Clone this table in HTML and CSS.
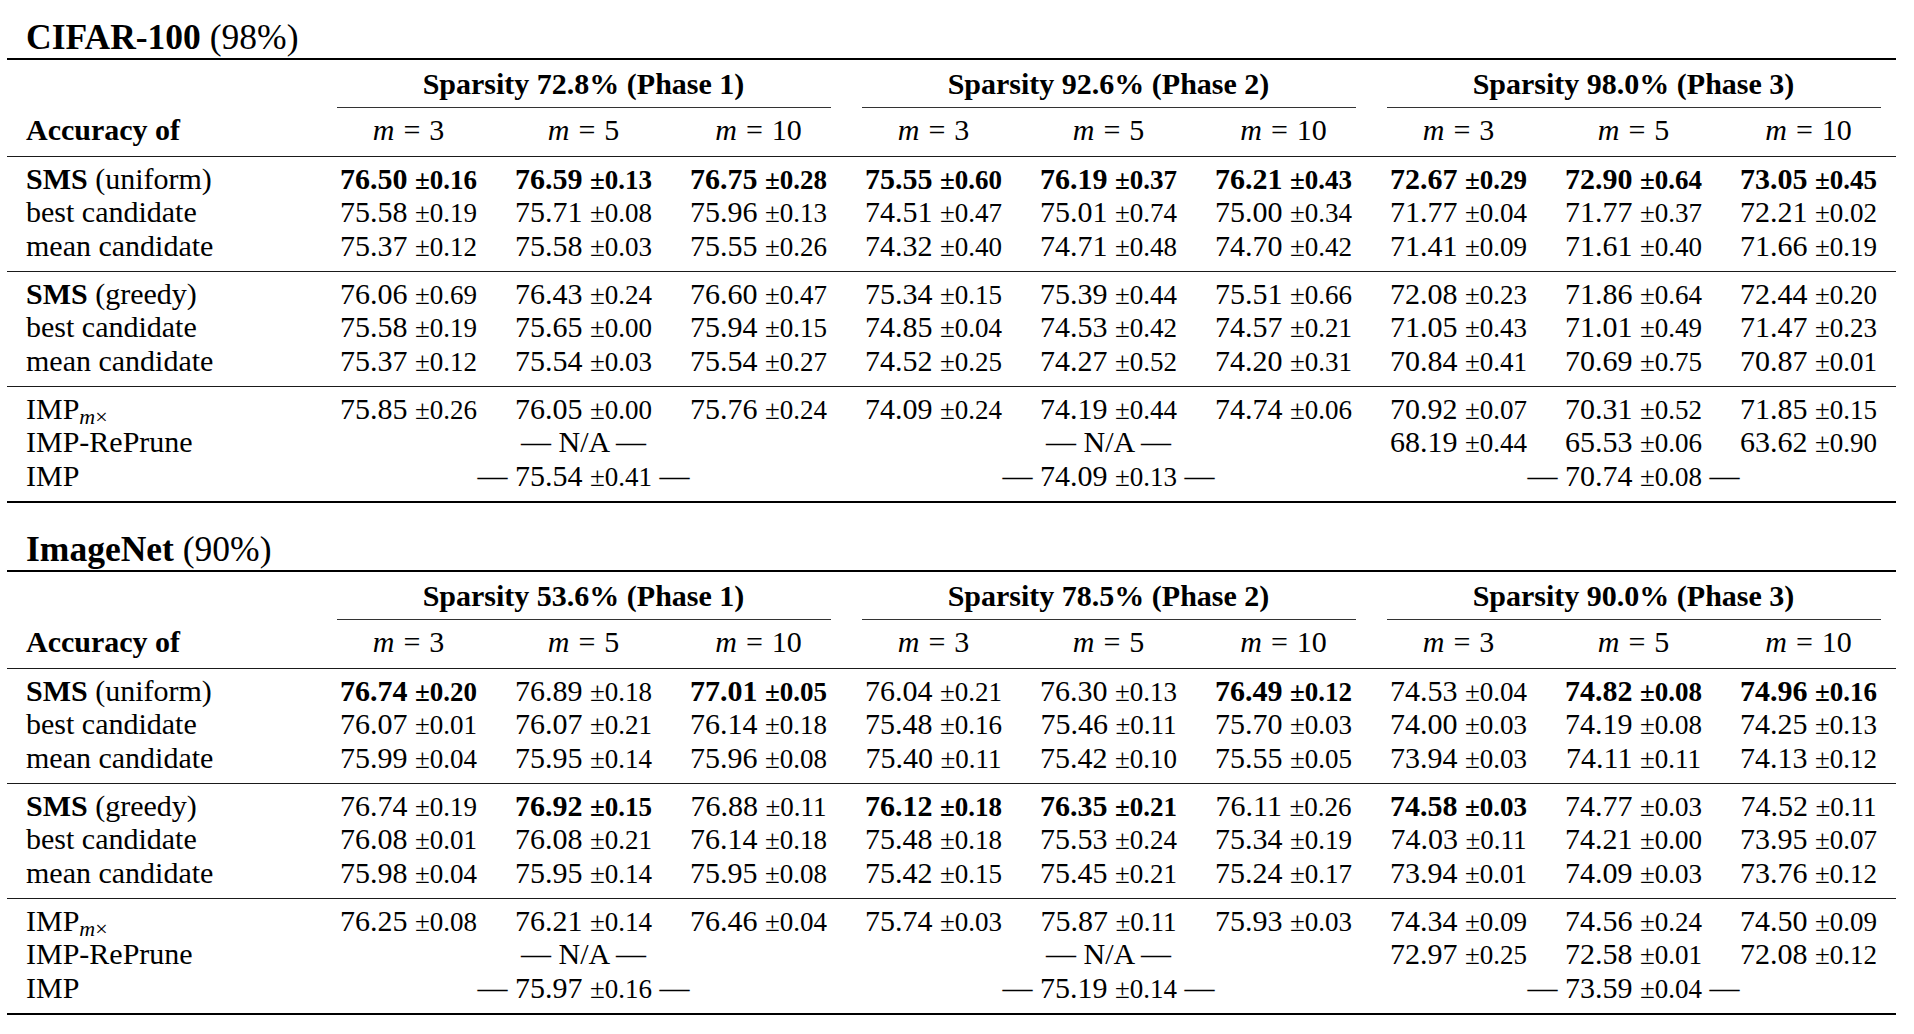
FILE: index.html
```html
<!DOCTYPE html>
<html lang="en">
<head>
<meta charset="utf-8">
<title>SMS results</title>
<link rel="stylesheet" href="styles.css">
</head>
<body>
<div class="page">

<h2 class="title"><b>CIFAR-100</b> (98%)</h2>
<div class="tbl">
  <div class="grid head">
    <span></span>
    <span class="hd s3">Sparsity 72.8% (Phase 1)</span>
    <span class="hd s3">Sparsity 92.6% (Phase 2)</span>
    <span class="hd s3">Sparsity 98.0% (Phase 3)</span>
    <span></span>
    <span class="cmid s3"></span><span class="cmid s3"></span><span class="cmid s3"></span>
    <span class="lab hd">Accuracy of</span>
    <span class="m"><i>m</i><span class="eq">=</span>3</span><span class="m"><i>m</i><span class="eq">=</span>5</span><span class="m"><i>m</i><span class="eq">=</span>10</span>
    <span class="m"><i>m</i><span class="eq">=</span>3</span><span class="m"><i>m</i><span class="eq">=</span>5</span><span class="m"><i>m</i><span class="eq">=</span>10</span>
    <span class="m"><i>m</i><span class="eq">=</span>3</span><span class="m"><i>m</i><span class="eq">=</span>5</span><span class="m"><i>m</i><span class="eq">=</span>10</span>
  </div>
  <div class="grid grp">
    <span class="lab"><b>SMS</b> (uniform)</span>
    <span class="c b">76.50 <span class="pm">±0.16</span></span><span class="c b">76.59 <span class="pm">±0.13</span></span><span class="c b">76.75 <span class="pm">±0.28</span></span>
    <span class="c b">75.55 <span class="pm">±0.60</span></span><span class="c b">76.19 <span class="pm">±0.37</span></span><span class="c b">76.21 <span class="pm">±0.43</span></span>
    <span class="c b">72.67 <span class="pm">±0.29</span></span><span class="c b">72.90 <span class="pm">±0.64</span></span><span class="c b">73.05 <span class="pm">±0.45</span></span>
    <span class="lab">best candidate</span>
    <span class="c">75.58 <span class="pm">±0.19</span></span><span class="c">75.71 <span class="pm">±0.08</span></span><span class="c">75.96 <span class="pm">±0.13</span></span>
    <span class="c">74.51 <span class="pm">±0.47</span></span><span class="c">75.01 <span class="pm">±0.74</span></span><span class="c">75.00 <span class="pm">±0.34</span></span>
    <span class="c">71.77 <span class="pm">±0.04</span></span><span class="c">71.77 <span class="pm">±0.37</span></span><span class="c">72.21 <span class="pm">±0.02</span></span>
    <span class="lab">mean candidate</span>
    <span class="c">75.37 <span class="pm">±0.12</span></span><span class="c">75.58 <span class="pm">±0.03</span></span><span class="c">75.55 <span class="pm">±0.26</span></span>
    <span class="c">74.32 <span class="pm">±0.40</span></span><span class="c">74.71 <span class="pm">±0.48</span></span><span class="c">74.70 <span class="pm">±0.42</span></span>
    <span class="c">71.41 <span class="pm">±0.09</span></span><span class="c">71.61 <span class="pm">±0.40</span></span><span class="c">71.66 <span class="pm">±0.19</span></span>
  </div>
  <div class="grid grp">
    <span class="lab"><b>SMS</b> (greedy)</span>
    <span class="c">76.06 <span class="pm">±0.69</span></span><span class="c">76.43 <span class="pm">±0.24</span></span><span class="c">76.60 <span class="pm">±0.47</span></span>
    <span class="c">75.34 <span class="pm">±0.15</span></span><span class="c">75.39 <span class="pm">±0.44</span></span><span class="c">75.51 <span class="pm">±0.66</span></span>
    <span class="c">72.08 <span class="pm">±0.23</span></span><span class="c">71.86 <span class="pm">±0.64</span></span><span class="c">72.44 <span class="pm">±0.20</span></span>
    <span class="lab">best candidate</span>
    <span class="c">75.58 <span class="pm">±0.19</span></span><span class="c">75.65 <span class="pm">±0.00</span></span><span class="c">75.94 <span class="pm">±0.15</span></span>
    <span class="c">74.85 <span class="pm">±0.04</span></span><span class="c">74.53 <span class="pm">±0.42</span></span><span class="c">74.57 <span class="pm">±0.21</span></span>
    <span class="c">71.05 <span class="pm">±0.43</span></span><span class="c">71.01 <span class="pm">±0.49</span></span><span class="c">71.47 <span class="pm">±0.23</span></span>
    <span class="lab">mean candidate</span>
    <span class="c">75.37 <span class="pm">±0.12</span></span><span class="c">75.54 <span class="pm">±0.03</span></span><span class="c">75.54 <span class="pm">±0.27</span></span>
    <span class="c">74.52 <span class="pm">±0.25</span></span><span class="c">74.27 <span class="pm">±0.52</span></span><span class="c">74.20 <span class="pm">±0.31</span></span>
    <span class="c">70.84 <span class="pm">±0.41</span></span><span class="c">70.69 <span class="pm">±0.75</span></span><span class="c">70.87 <span class="pm">±0.01</span></span>
  </div>
  <div class="grid grp">
    <span class="lab">IMP<sub><i>m</i>×</sub></span>
    <span class="c">75.85 <span class="pm">±0.26</span></span><span class="c">76.05 <span class="pm">±0.00</span></span><span class="c">75.76 <span class="pm">±0.24</span></span>
    <span class="c">74.09 <span class="pm">±0.24</span></span><span class="c">74.19 <span class="pm">±0.44</span></span><span class="c">74.74 <span class="pm">±0.06</span></span>
    <span class="c">70.92 <span class="pm">±0.07</span></span><span class="c">70.31 <span class="pm">±0.52</span></span><span class="c">71.85 <span class="pm">±0.15</span></span>
    <span class="lab">IMP-RePrune</span>
    <span class="c s3">— N/A —</span>
    <span class="c s3">— N/A —</span>
    <span class="c">68.19 <span class="pm">±0.44</span></span><span class="c">65.53 <span class="pm">±0.06</span></span><span class="c">63.62 <span class="pm">±0.90</span></span>
    <span class="lab">IMP</span>
    <span class="c s3">— 75.54 <span class="pm">±0.41</span> —</span>
    <span class="c s3">— 74.09 <span class="pm">±0.13</span> —</span>
    <span class="c s3">— 70.74 <span class="pm">±0.08</span> —</span>
  </div>
</div>

<h2 class="title"><b>ImageNet</b> (90%)</h2>
<div class="tbl">
  <div class="grid head">
    <span></span>
    <span class="hd s3">Sparsity 53.6% (Phase 1)</span>
    <span class="hd s3">Sparsity 78.5% (Phase 2)</span>
    <span class="hd s3">Sparsity 90.0% (Phase 3)</span>
    <span></span>
    <span class="cmid s3"></span><span class="cmid s3"></span><span class="cmid s3"></span>
    <span class="lab hd">Accuracy of</span>
    <span class="m"><i>m</i><span class="eq">=</span>3</span><span class="m"><i>m</i><span class="eq">=</span>5</span><span class="m"><i>m</i><span class="eq">=</span>10</span>
    <span class="m"><i>m</i><span class="eq">=</span>3</span><span class="m"><i>m</i><span class="eq">=</span>5</span><span class="m"><i>m</i><span class="eq">=</span>10</span>
    <span class="m"><i>m</i><span class="eq">=</span>3</span><span class="m"><i>m</i><span class="eq">=</span>5</span><span class="m"><i>m</i><span class="eq">=</span>10</span>
  </div>
  <div class="grid grp">
    <span class="lab"><b>SMS</b> (uniform)</span>
    <span class="c b">76.74 <span class="pm">±0.20</span></span><span class="c">76.89 <span class="pm">±0.18</span></span><span class="c b">77.01 <span class="pm">±0.05</span></span>
    <span class="c">76.04 <span class="pm">±0.21</span></span><span class="c">76.30 <span class="pm">±0.13</span></span><span class="c b">76.49 <span class="pm">±0.12</span></span>
    <span class="c">74.53 <span class="pm">±0.04</span></span><span class="c b">74.82 <span class="pm">±0.08</span></span><span class="c b">74.96 <span class="pm">±0.16</span></span>
    <span class="lab">best candidate</span>
    <span class="c">76.07 <span class="pm">±0.01</span></span><span class="c">76.07 <span class="pm">±0.21</span></span><span class="c">76.14 <span class="pm">±0.18</span></span>
    <span class="c">75.48 <span class="pm">±0.16</span></span><span class="c">75.46 <span class="pm">±0.11</span></span><span class="c">75.70 <span class="pm">±0.03</span></span>
    <span class="c">74.00 <span class="pm">±0.03</span></span><span class="c">74.19 <span class="pm">±0.08</span></span><span class="c">74.25 <span class="pm">±0.13</span></span>
    <span class="lab">mean candidate</span>
    <span class="c">75.99 <span class="pm">±0.04</span></span><span class="c">75.95 <span class="pm">±0.14</span></span><span class="c">75.96 <span class="pm">±0.08</span></span>
    <span class="c">75.40 <span class="pm">±0.11</span></span><span class="c">75.42 <span class="pm">±0.10</span></span><span class="c">75.55 <span class="pm">±0.05</span></span>
    <span class="c">73.94 <span class="pm">±0.03</span></span><span class="c">74.11 <span class="pm">±0.11</span></span><span class="c">74.13 <span class="pm">±0.12</span></span>
  </div>
  <div class="grid grp">
    <span class="lab"><b>SMS</b> (greedy)</span>
    <span class="c">76.74 <span class="pm">±0.19</span></span><span class="c b">76.92 <span class="pm">±0.15</span></span><span class="c">76.88 <span class="pm">±0.11</span></span>
    <span class="c b">76.12 <span class="pm">±0.18</span></span><span class="c b">76.35 <span class="pm">±0.21</span></span><span class="c">76.11 <span class="pm">±0.26</span></span>
    <span class="c b">74.58 <span class="pm">±0.03</span></span><span class="c">74.77 <span class="pm">±0.03</span></span><span class="c">74.52 <span class="pm">±0.11</span></span>
    <span class="lab">best candidate</span>
    <span class="c">76.08 <span class="pm">±0.01</span></span><span class="c">76.08 <span class="pm">±0.21</span></span><span class="c">76.14 <span class="pm">±0.18</span></span>
    <span class="c">75.48 <span class="pm">±0.18</span></span><span class="c">75.53 <span class="pm">±0.24</span></span><span class="c">75.34 <span class="pm">±0.19</span></span>
    <span class="c">74.03 <span class="pm">±0.11</span></span><span class="c">74.21 <span class="pm">±0.00</span></span><span class="c">73.95 <span class="pm">±0.07</span></span>
    <span class="lab">mean candidate</span>
    <span class="c">75.98 <span class="pm">±0.04</span></span><span class="c">75.95 <span class="pm">±0.14</span></span><span class="c">75.95 <span class="pm">±0.08</span></span>
    <span class="c">75.42 <span class="pm">±0.15</span></span><span class="c">75.45 <span class="pm">±0.21</span></span><span class="c">75.24 <span class="pm">±0.17</span></span>
    <span class="c">73.94 <span class="pm">±0.01</span></span><span class="c">74.09 <span class="pm">±0.03</span></span><span class="c">73.76 <span class="pm">±0.12</span></span>
  </div>
  <div class="grid grp">
    <span class="lab">IMP<sub><i>m</i>×</sub></span>
    <span class="c">76.25 <span class="pm">±0.08</span></span><span class="c">76.21 <span class="pm">±0.14</span></span><span class="c">76.46 <span class="pm">±0.04</span></span>
    <span class="c">75.74 <span class="pm">±0.03</span></span><span class="c">75.87 <span class="pm">±0.11</span></span><span class="c">75.93 <span class="pm">±0.03</span></span>
    <span class="c">74.34 <span class="pm">±0.09</span></span><span class="c">74.56 <span class="pm">±0.24</span></span><span class="c">74.50 <span class="pm">±0.09</span></span>
    <span class="lab">IMP-RePrune</span>
    <span class="c s3">— N/A —</span>
    <span class="c s3">— N/A —</span>
    <span class="c">72.97 <span class="pm">±0.25</span></span><span class="c">72.58 <span class="pm">±0.01</span></span><span class="c">72.08 <span class="pm">±0.12</span></span>
    <span class="lab">IMP</span>
    <span class="c s3">— 75.97 <span class="pm">±0.16</span> —</span>
    <span class="c s3">— 75.19 <span class="pm">±0.14</span> —</span>
    <span class="c s3">— 73.59 <span class="pm">±0.04</span> —</span>
  </div>
</div>

</div>
</body>
</html>
```

FILE: styles.css
```css
* { box-sizing: border-box; }
html, body { margin: 0; background: #fff; }
body {
  font-family: "Liberation Serif", "Times New Roman", serif;
  color: #000;
}
.page {
  padding: 16px 0 0 7px;
  width: 1914px;
}
.title {
  margin: 0;
  padding-left: 19px;
  font-size: 35.5px;
  line-height: 42px;
  font-weight: normal;
  white-space: nowrap;
}
.title b { font-weight: bold; }

.tbl {
  width: 1889px;
  border-top: 2px solid #000;
  border-bottom: 2px solid #000;
  margin-bottom: 25px;
}
.grid {
  display: grid;
  grid-template-columns: 314px repeat(9, 175px);
  font-size: 30px;
  white-space: nowrap;
}
.head {
  padding: 7px 0 10px;
  grid-template-rows: 33px 13px 33px;
  line-height: 33px;
}
.grp {
  border-top: 1px solid #1a1a1a;
  padding: 5px 0 9px;
  grid-auto-rows: 33.33px;
  line-height: 33.33px;
}
.s3 { grid-column: span 3; }
.hd { font-weight: bold; text-align: center; }
.lab { padding-left: 19px; text-align: left; }
.lab.hd { text-align: left; }
.lab b { font-weight: bold; }
.cmid {
  align-self: start;
  margin: 7px 15px 0 16px;
  border-top: 1px solid #333;
  height: 0;
}
.m { text-align: center; }
.m i { font-style: italic; }
.eq { margin: 0 0.3em; }
.c { text-align: center; }
.c.b { font-weight: bold; }
.pm { font-size: 27px; line-height: 0; }
sub {
  font-size: 22px;
  line-height: 0;
  vertical-align: -5px;
}
sub i { font-style: italic; }
```
